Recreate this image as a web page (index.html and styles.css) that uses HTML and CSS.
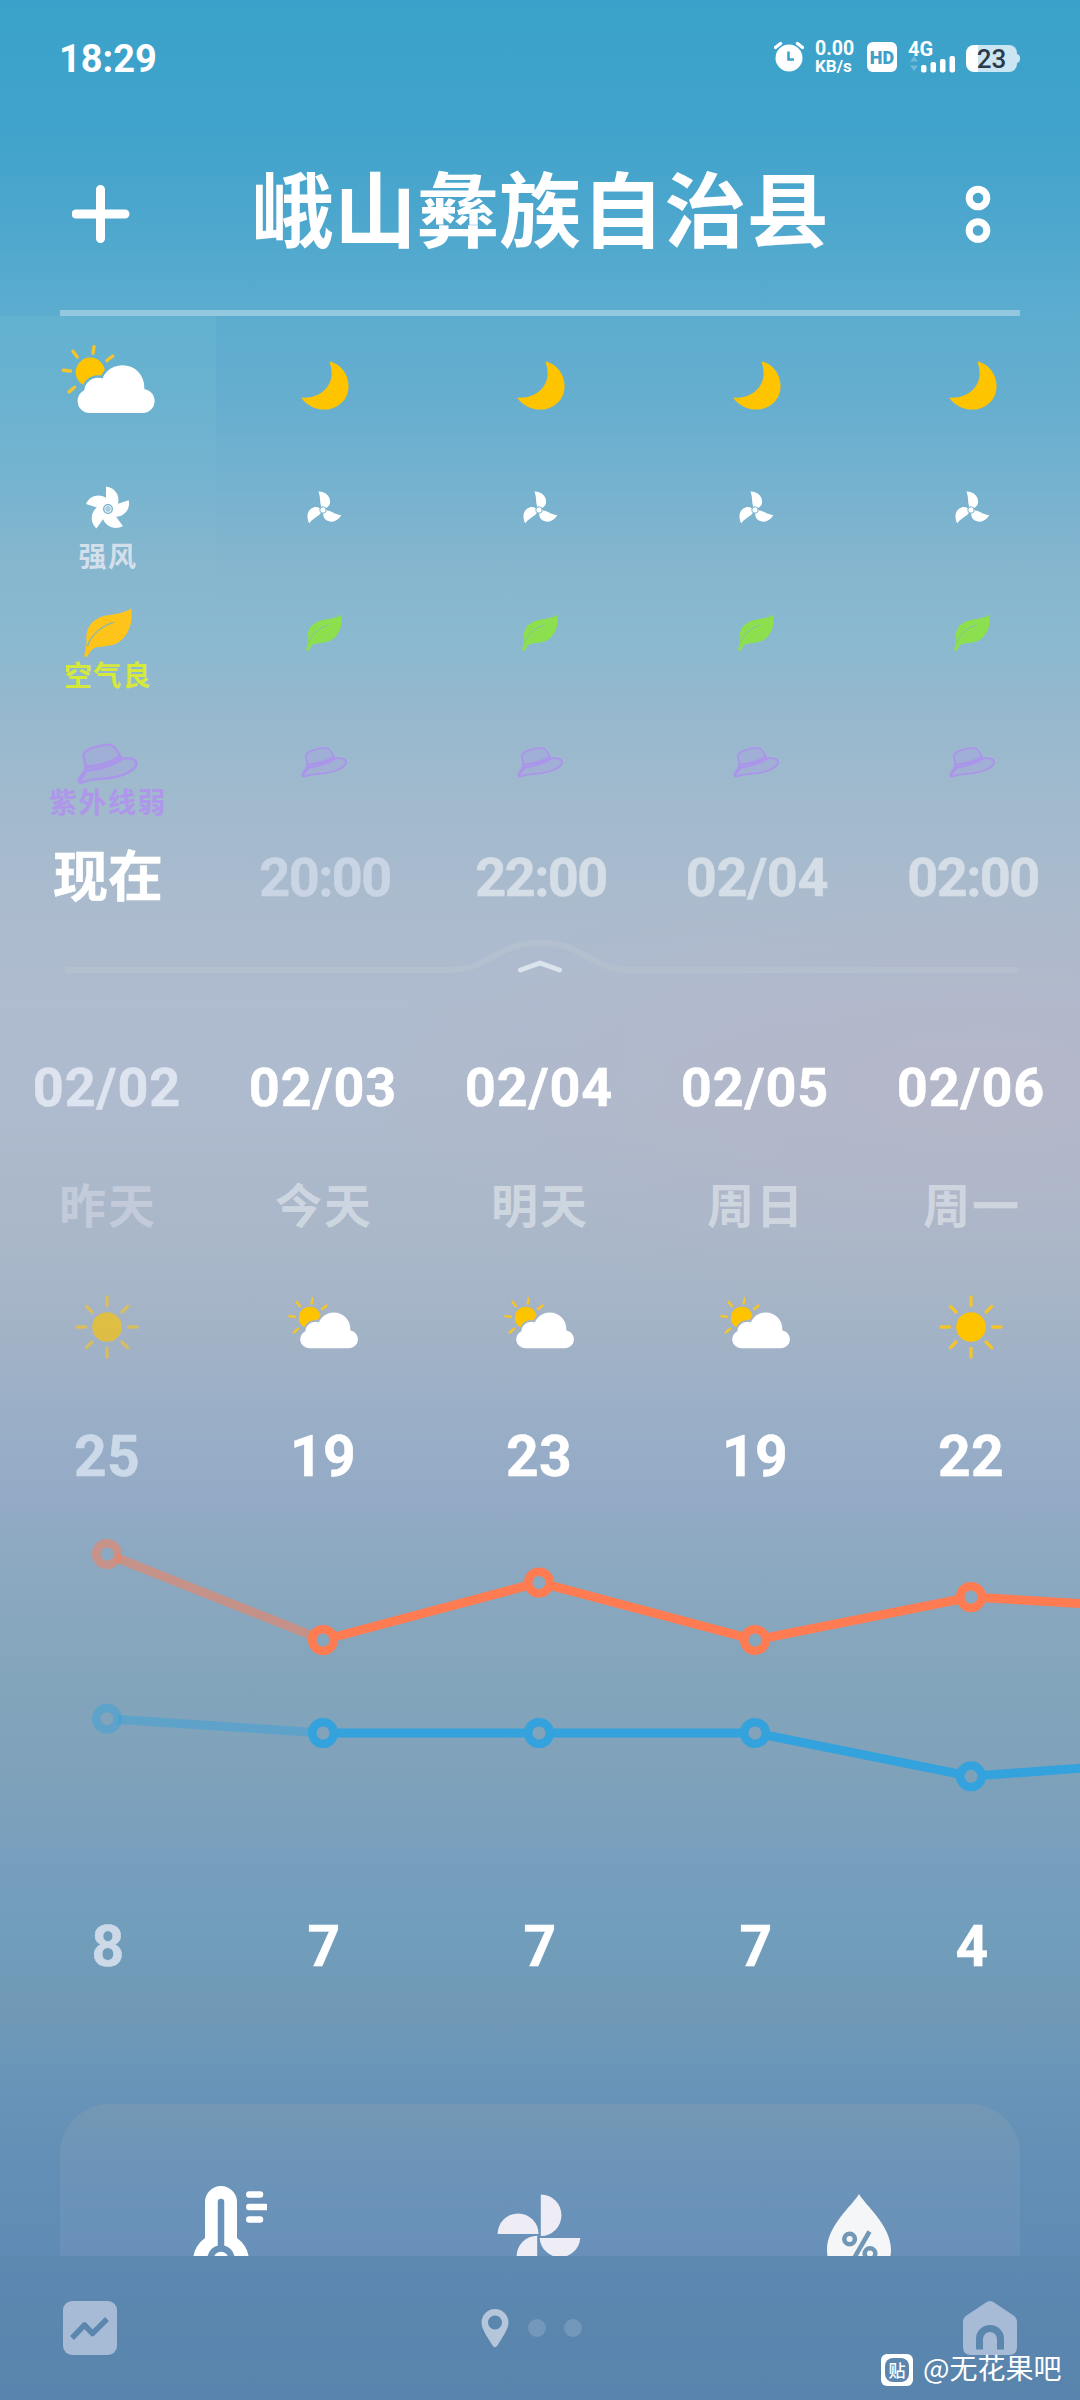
FILE: index.html
```html
<!DOCTYPE html>
<html lang="zh-CN">
<head>
<meta charset="utf-8">
<title>天气</title>
<link rel="stylesheet" href="styles.css">
</head>
<body>
<svg class="defs" width="0" height="0" aria-hidden="true">
  <defs>
    <mask id="sunCut" maskUnits="userSpaceOnUse" x="0" y="0" width="96" height="82">
      <rect width="96" height="82" fill="#fff"/>
      <g fill="#000" stroke="#000" stroke-width="5">
        <circle cx="62.5" cy="43" r="21.8"/><circle cx="38" cy="47.5" r="13.8"/><rect x="17.6" y="45" width="77" height="24" rx="12"/>
      </g>
    </mask>
    <mask id="chartHoles" maskUnits="userSpaceOnUse" x="0" y="0" width="1080" height="430">
      <rect width="1080" height="430" fill="#fff"/>
      <g fill="#000">
        <circle cx="107" cy="69" r="11"/><circle cx="323" cy="155" r="11"/><circle cx="539" cy="97.5" r="11"/><circle cx="755" cy="155" r="11"/><circle cx="971" cy="112" r="11"/>
        <circle cx="107" cy="233.7" r="11"/><circle cx="323" cy="248" r="11"/><circle cx="539" cy="248" r="11"/><circle cx="755" cy="248" r="11"/><circle cx="971" cy="291.3" r="11"/>
      </g>
    </mask>
  </defs>
  <symbol id="partly" viewBox="0 0 96 82">
    <circle cx="30.3" cy="28.2" r="14.6" fill="#ffc400" mask="url(#sunCut)"/>
    <path d="M33 9.3 34 2.8M17.2 13 13 7.2M46.8 16.6 52.8 12M10.4 27 3.4 26.2M14.6 43.2 9 48" fill="none" stroke="#f4c42c" stroke-width="3.4" stroke-linecap="round"/>
    <g fill="#fff"><circle cx="62.5" cy="43" r="21.8"/><circle cx="38" cy="47.5" r="13.8"/><rect x="17.6" y="45" width="77" height="24" rx="12"/><path d="M82 40 84.5 44.8 80 50 70 50Z"/></g>
  </symbol>
  <symbol id="moon" viewBox="0 0 49 49">
    <path d="M29.5 .5C41 3 48.6 13.500 48.600 25C48.600 38.500 38 48.600 24.500 48.600C14.500 48.600 6 44 1 36.500C18.500 38.500 34 26 31.300 8.500C30.800 5 30.300 3 29.500 .5Z" fill="#ffc400"/>
  </symbol>
  <symbol id="sun" viewBox="-36 -36 72 72">
    <circle r="14.800" fill="#ffc400"/>
    <path d="M0-21.500V-30M0 21.500V30M-21.500 0H-30M21.500 0H30M15-15 20.600-20.600M-15-15-20.600-20.600M15 15 20.600 20.600M-15 15-20.600 20.600" stroke="#f4c42c" stroke-width="3.300" stroke-linecap="round"/>
  </symbol>
  <symbol id="fan5" viewBox="-24 -24 48 48">
    <path id="blade5" d="M-2-22.500C7-21.500 12-13.500 10-5.500C9.500-3.500 7.500-1 5.500-.3L-2-4.500Z" fill="#fff"/>
    <use href="#blade5" transform="rotate(72)"/><use href="#blade5" transform="rotate(144)"/><use href="#blade5" transform="rotate(216)"/><use href="#blade5" transform="rotate(288)"/>
    <circle r="4.300" fill="#fff" stroke="#6fabc9" stroke-width="1.300"/><circle r="2.900" fill="#a9cfe2"/>
  </symbol>
  <symbol id="fan3" viewBox="-24 -25 48 48">
    <path id="blade3" d="M-4.500-18.500C3-18.500 8-13 7-7C6.500-4.500 5-3 3-2L-1.500-3C-3.500-7-2-11-4.500-18.500Z" fill="#fff"/>
    <use href="#blade3" transform="rotate(120)"/><use href="#blade3" transform="rotate(240)"/>
    <circle r="3.200" fill="#fff" stroke="#7bb3ce" stroke-width="1"/>
  </symbol>
  <symbol id="leaf" viewBox="0 0 48 50" overflow="visible">
    <path d="M47.300 .5C49.500 13 44.500 32 29 36.800C20 39.500 12 37.500 7.500 42L2.800 49 0 48.300C1.200 43 3 38 2.400 31C1.500 18 11 9.500 22 7.500C33 6 41 4.500 47.300 .5Z" fill="currentColor"/>
    <path d="M3.500 38C7 27 18 17.500 29.500 14.300" fill="none" stroke="#8cb9b4" stroke-width="1.300" stroke-linecap="round"/>
  </symbol>
  <symbol id="hat" viewBox="0 0 62 42" overflow="visible">
    <path d="M8.500 24C8.500 18 4.500 14 7.500 9.500C9.500 6 25 1.500 31.500 1.600C39 2 39.500 8 44.500 15.500C54 14 60 17 59.500 21C58.500 27 47 33 33 35C22 36.500 12 35.500 5.500 39.500C3 40.500 1 38.500 2 36C4 31 9 29 8.500 24Z" fill="rgba(174,150,234,.28)" stroke="#ab95ea" stroke-width="2.400" stroke-linejoin="round"/>
    <path d="M8.500 24C20 23 31 21 41.500 14.500M8.500 28C21 26 32 24 44 16.500M3 37.500 9.500 27" fill="none" stroke="#ab95ea" stroke-width="3" stroke-linecap="round"/>
  </symbol>
</svg>

<div class="screen">
  <header class="status">
    <span class="clock">18:29</span>
    <div class="status-icons">
      <svg class="alarm" width="30" height="32" viewBox="0 0 30 32"><circle cx="15" cy="18" r="13.500" fill="#fff"/><path d="M1.500 7.500 6.500 3.500M28.500 7.500 23.500 3.500" stroke="#fff" stroke-width="3.400" stroke-linecap="round"/><path d="M14.500 11.500V19.500H20" fill="none" stroke="#3ea2ca" stroke-width="2.600"/></svg>
      <span class="speed"><b>0.00</b><b class="unit">KB/s</b></span>
      <span class="hd">HD</span>
      <span class="cell"><b>4G</b>
        <svg width="48" height="17" viewBox="0 0 48 17"><g fill="#6fbad8"><path d="M1 5.500 5 0 9 5.500Z"/><path d="M1 9.500H9L5 15Z"/></g><g fill="#fff"><rect x="12" y="9" width="5.500" height="7.500" rx="2"/><rect x="21.500" y="6" width="5.500" height="10.500" rx="2"/><rect x="31" y="3" width="5.500" height="13.500" rx="2"/><rect x="40.500" y="0" width="5.500" height="16.500" rx="2"/></g></svg>
      </span>
      <span class="battery">23</span>
    </div>
  </header>

  <div class="header">
    <svg width="58" height="58" viewBox="0 0 58 58"><path d="M28.500 4.500V53.500M4 29H53" stroke="#fff" stroke-width="9" stroke-linecap="round"/></svg>
    <h1>峨山彝族自治县</h1>
    <svg width="58" height="58" viewBox="0 0 58 58"><g fill="none" stroke="#fff" stroke-width="7"><circle cx="30" cy="13" r="8.800"/><circle cx="30" cy="45.500" r="8.800"/></g></svg>
  </div>
  <div class="rule"></div>

  <section class="hourly">
    <div class="hour now">
      <div class="wx"><svg width="96" height="82"><use href="#partly"/></svg></div>
      <div class="wind"><svg width="48" height="48"><use href="#fan5"/></svg><span>强风</span></div>
      <div class="air good"><svg width="48" height="50"><use href="#leaf"/></svg><span>空气良</span></div>
      <div class="uv"><svg width="62" height="42"><use href="#hat"/></svg><span>紫外线弱</span></div>
      <div class="time">现在</div>
    </div>
    <div class="hour past">
      <div class="wx"><svg width="49" height="49"><use href="#moon"/></svg></div>
      <div class="wind"><svg width="48" height="48"><use href="#fan3"/></svg></div>
      <div class="air"><svg width="36" height="50"><use href="#leaf"/></svg></div>
      <div class="uv"><svg width="47" height="39"><use href="#hat"/></svg></div>
      <div class="time">20:00</div>
    </div>
    <div class="hour">
      <div class="wx"><svg width="49" height="49"><use href="#moon"/></svg></div>
      <div class="wind"><svg width="48" height="48"><use href="#fan3"/></svg></div>
      <div class="air"><svg width="36" height="50"><use href="#leaf"/></svg></div>
      <div class="uv"><svg width="47" height="39"><use href="#hat"/></svg></div>
      <div class="time">22:00</div>
    </div>
    <div class="hour">
      <div class="wx"><svg width="49" height="49"><use href="#moon"/></svg></div>
      <div class="wind"><svg width="48" height="48"><use href="#fan3"/></svg></div>
      <div class="air"><svg width="36" height="50"><use href="#leaf"/></svg></div>
      <div class="uv"><svg width="47" height="39"><use href="#hat"/></svg></div>
      <div class="time date">02/04</div>
    </div>
    <div class="hour">
      <div class="wx"><svg width="49" height="49"><use href="#moon"/></svg></div>
      <div class="wind"><svg width="48" height="48"><use href="#fan3"/></svg></div>
      <div class="air"><svg width="36" height="50"><use href="#leaf"/></svg></div>
      <div class="uv"><svg width="47" height="39"><use href="#hat"/></svg></div>
      <div class="time">02:00</div>
    </div>
  </section>

  <svg class="divider" width="1080" height="70" viewBox="0 0 1080 70">
    <path d="M65 40H450C490 40 495 13 540 13S590 40 630 40H1018" fill="none" stroke="#b7c3cf" stroke-opacity=".6" stroke-width="6"/>
    <path d="M520.500 40 540 33 559.500 40" fill="none" stroke="#dbe3ed" stroke-width="5" stroke-linecap="round" stroke-linejoin="round"/>
  </svg>

  <section class="daily">
    <div class="day yesterday"><span class="date">02/02</span><span class="name">昨天</span><svg width="72" height="72"><use href="#sun"/></svg><span class="temp">25</span></div>
    <div class="day"><span class="date">02/03</span><span class="name">今天</span><svg width="72" height="72" viewBox="0 0 72 72"><use href="#partly" y="5.500" width="72" height="61.500"/></svg><span class="temp">19</span></div>
    <div class="day"><span class="date">02/04</span><span class="name">明天</span><svg width="72" height="72" viewBox="0 0 72 72"><use href="#partly" y="5.500" width="72" height="61.500"/></svg><span class="temp">23</span></div>
    <div class="day"><span class="date">02/05</span><span class="name">周日</span><svg width="72" height="72" viewBox="0 0 72 72"><use href="#partly" y="5.500" width="72" height="61.500"/></svg><span class="temp">19</span></div>
    <div class="day"><span class="date">02/06</span><span class="name">周一</span><svg width="72" height="72"><use href="#sun"/></svg><span class="temp">22</span></div>
  </section>

  <svg class="chart" width="1080" height="430" viewBox="0 0 1080 430" fill="none">
    <g mask="url(#chartHoles)" stroke-width="9">
      <g stroke="#ff7c52"><path d="M107 69 323 155" stroke-opacity=".5"/><path d="M323 155 539 97.500 755 155 971 112 1090 119"/></g>
      <g stroke="#34a2dc"><path d="M107 233.700 323 248" stroke-opacity=".45"/><path d="M323 248H755L971 291.300 1090 282.500"/></g>
    </g>
    <g stroke-width="8.500">
      <g stroke="#ff7c52"><circle cx="107" cy="69" r="10.800" stroke-opacity=".5"/><circle cx="323" cy="155" r="10.800"/><circle cx="539" cy="97.500" r="10.800"/><circle cx="755" cy="155" r="10.800"/><circle cx="971" cy="112" r="10.800"/></g>
      <g stroke="#34a2dc"><circle cx="107" cy="233.700" r="10.800" stroke-opacity=".45"/><circle cx="323" cy="248" r="10.800"/><circle cx="539" cy="248" r="10.800"/><circle cx="755" cy="248" r="10.800"/><circle cx="971" cy="291.300" r="10.800"/></g>
    </g>
  </svg>

  <div class="lows"><span class="faded">8</span><span>7</span><span>7</span><span>7</span><span>4</span></div>

  <section class="details">
    <svg width="76" height="76" viewBox="190 2180 76 76"><path d="M204 2202a16 16 0 0 1 32 0V2238A28 28 0 1 1 204 2238Z" fill="#fff"/><path d="M220 2202V2248" stroke="#6892b7" stroke-width="6.500" stroke-linecap="round"/><circle cx="220" cy="2259" r="10.500" fill="#fff" stroke="#6892b7" stroke-width="6.500"/><path d="M248.300 2194.500H259M248.300 2207H264.300M248.300 2219.500H259" stroke="#fff" stroke-width="6.500" stroke-linecap="round"/></svg>
    <svg class="pinwheel" width="84" height="76" viewBox="497 2180 84 76" fill="#eeedf6"><path d="M497.600 2234A20.500 20.500 0 0 1 538.600 2234Z"/><path d="M540.800 2194.500A20.600 20.700 0 0 1 540.800 2236Z"/><path d="M539.600 2238H580.300A20.400 20.500 0 0 1 539.600 2238Z"/><path d="M537.200 2235.700V2277A20.600 20.600 0 0 1 537.200 2235.700Z"/></svg>
    <svg width="66" height="76" viewBox="826 2180 66 76"><path d="M859 2194C865 2205 891 2225 891 2250A32 32 0 0 1 827 2250C827 2225 853 2205 859 2194Z" fill="#f5f6f8"/><g fill="none" stroke="#7097b5" stroke-width="4.500"><circle cx="849.600" cy="2239" r="5.300"/><circle cx="870" cy="2253.500" r="5.300"/><path d="M869.500 2231.500 853 2260"/></g></svg>
  </section>

  <nav>
    <svg width="54" height="54" viewBox="0 0 54 54"><rect width="54" height="54" rx="9" fill="#a7bbd7"/><path d="M9 37 21.500 24 29.500 32.500 44 18" fill="none" stroke="#5b86ae" stroke-width="5.500" stroke-linejoin="round"/></svg>
    <div class="pager">
      <svg width="28" height="40" viewBox="0 0 28 40"><path fill-rule="evenodd" d="M14 1A13.500 13.500 0 0 1 27.500 14.500C27.500 22 20 31 16.500 37.500Q14 41 11.500 37.500C8 31 .5 22 .5 14.500A13.500 13.500 0 0 1 14 1ZM14 7.500A7 7 0 1 0 14 21.500 7 7 0 1 0 14 7.500Z" fill="#b5c6da"/></svg>
      <i></i><i></i>
    </div>
    <svg width="54" height="54" viewBox="0 0 54 54"><path d="M23 1.500Q27-1.500 31 1.500L50.500 14.500Q54 17 54 21V46Q54 54 46 54H8Q0 54 0 46V21Q0 17 3.500 14.500Z" fill="#a7bbd7"/><path d="M16.500 48.500V38A10.500 10.500 0 0 1 37.500 38V48.500" fill="none" stroke="#5b86ae" stroke-width="7"/></svg>
  </nav>

  <div class="watermark">
    <span class="badge"><em>贴</em></span>
    <span class="author">@无花果吧</span>
  </div>
</div>
</body>
</html>
```
FILE: styles.css
```css
* { box-sizing: border-box; }
body { margin: 0; }
svg { display: block; flex: none; }
.defs { position: absolute; }

.screen {
  position: relative;
  width: 1080px;
  height: 2400px;
  overflow: hidden;
  color: #fff;
  font-family: Roboto, "Noto Sans CJK SC", sans-serif;
  background:
    radial-gradient(ellipse 620px 230px at 980px 1090px, rgba(186, 180, 196, .5), rgba(186, 180, 196, 0)),
    linear-gradient(180deg,
      #3aa2ca 0, #40a3cb 120px, #4ba6cd 210px, #5aaccf 300px, #66aecf 400px, #76b2cf 490px,
      #85b5ce 560px, #8ab9d0 640px, #96b8ce 710px, #a1bacd 800px, #abbbce 900px, #afbbcf 1000px,
      #aebacd 1120px, #a9b7c9 1240px, #a3b3c6 1330px, #9aafc7 1410px, #94aac6 1500px,
      #8ca9c1 1560px, #83a5bc 1680px, #80a2ba 1760px, #789fbd 1850px, #719ebc 1930px,
      #7099b5 2010px, #6995b9 2080px, #638fb6 2160px, #608bb4 2250px, #5d88b1 2300px, #5884ad 2400px);
}

.status {
  display: flex;
  justify-content: space-between;
  height: 114px;
  padding: 40px 60px 0 59px;
}
.clock { font-size: 38px; line-height: 38px; font-weight: 700; }
.status-icons { display: flex; height: 34px; }
.alarm { margin-right: 11px; }
.speed { display: flex; flex-direction: column; width: 52px; }
.speed b { font-size: 19.500px; line-height: 18px; }
.speed .unit { font-size: 17px; line-height: 16px; }
.hd {
  width: 30px; height: 30px; margin: 2px 12px 0 0;
  border-radius: 6px; background: #fff; color: #3e9fc8;
  font-size: 18px; line-height: 31px; font-weight: 900; text-align: center;
}
.cell { width: 57px; }
.cell b { display: block; font-size: 20px; line-height: 19px; height: 16px; margin-left: -1px; }
.battery {
  position: relative;
  width: 51px; height: 27px; margin: 5px 3px 0 0;
  border-radius: 8px;
  background: linear-gradient(90deg, #fff 12px, #cbe6f2 12px);
  color: #2b3b49; font-size: 26px; line-height: 28px; font-weight: 500; text-align: center;
}
.battery::after {
  content: ""; position: absolute; right: -3px; top: 9px;
  width: 4px; height: 9px; border-radius: 0 4px 4px 0; background: #cbe6f2;
}

.header {
  display: flex;
  justify-content: space-between;
  align-items: center;
  height: 196px;
  padding: 4px 74px 0 72px;
}
.header h1 {
  margin: 0;
  padding: 0 0 16px 3px;
  font: 700 82px/110px "Noto Sans CJK SC", sans-serif;
  letter-spacing: .5px;
}
.rule { height: 6px; margin: 0 60px; background: rgba(255, 255, 255, .34); }

.hourly { display: grid; grid-template-columns: repeat(5, 216px); height: 614px; }
.hour { display: flex; flex-direction: column; align-items: center; }
.hour > div { display: flex; flex-direction: column; align-items: center; }
.hour.now { background: linear-gradient(180deg, rgba(145, 215, 215, .13), rgba(145, 205, 215, 0) 320px); }
.hour span {
  font: 700 28px/34px "Noto Sans CJK SC", sans-serif;
  letter-spacing: 1.400px;
  color: #d3dfeb;
}
.hour > .wx { height: 138px; justify-content: center; }
.hour > .wind { height: 122px; padding: 31px 2px 0 0; gap: 5px; }
.hour.now > .wind { padding-right: 0; }
.hour > .air { height: 130px; padding-top: 32px; color: #8ce04e; }
.hour > .air.good { color: #fec41a; }
.air.good span { color: #d6e93b; }
.air span, .uv span { margin-top: -1px; }
.hour > .uv { height: 120px; padding-top: 37px; }
.uv span { color: #ae96ea; }
.hour > .time {
  padding: 22px 0 0 2px;
  font-size: 54px; line-height: 60px; font-weight: 700;
  letter-spacing: -1.500px;
  color: #d5dee7;
  -webkit-text-stroke: .5px currentColor;
}
.hour > .time.date { letter-spacing: -.3px; }
.hour.past > .time { color: #c9d4e4; }
.hour.now > .time {
  padding: 16px 0 0;
  font-family: "Noto Sans CJK SC", sans-serif;
  font-size: 55px; color: #fff; letter-spacing: 0;
}

.daily { display: grid; grid-template-columns: repeat(5, 216px); padding-top: 58px; height: 485px; }
.day { display: flex; flex-direction: column; align-items: center; padding-right: 2px; }
.day .date {
  font-size: 54px; line-height: 60px; font-weight: 700; letter-spacing: .9px;
  -webkit-text-stroke: .5px currentColor;
}
.day .name {
  margin: 55px 0 58px 2px;
  font: 700 47px/60px "Noto Sans CJK SC", sans-serif;
  letter-spacing: 2px;
  color: rgba(240, 244, 246, .52);
}
.day .temp { margin-top: 64px; }
.temp, .lows {
  font-size: 57px; line-height: 60px; font-weight: 700; letter-spacing: .2px;
  -webkit-text-stroke: .5px currentColor;
}
.yesterday .date { color: #dde4f0; }
.yesterday .name { color: rgba(220, 222, 234, .5); }
.yesterday .temp, .lows .faded { color: #cbd9e8; }
.yesterday svg { opacity: .65; }

.lows {
  display: grid; grid-template-columns: repeat(5, 216px);
  height: 60px; padding-top: 2px; text-align: center;
}

.details {
  display: flex;
  height: 152px;
  margin: 129px 60px 0;
  padding: 76px 0 0 131px;
  border-radius: 50px 50px 0 0;
  background: linear-gradient(180deg, rgba(190, 180, 160, .14), rgba(180, 190, 200, .12) 60px, rgba(160, 180, 220, .13));
}
.pinwheel { margin: 0 245px 0 230px; }

nav {
  position: relative;
  display: flex;
  justify-content: space-between;
  height: 144px;
  padding: 45px 63px 0;
  background: rgba(90, 132, 173, .4);
}
.pager { display: flex; gap: 18px; padding-right: 18px; height: 54px; align-items: center; }
.pager i { width: 18px; height: 18px; border-radius: 50%; background: rgba(255, 255, 255, .15); }
.pager svg + i { margin-left: 1px; }

.watermark {
  position: absolute;
  left: 881px;
  top: 2352px;
  display: flex;
  align-items: center;
  gap: 10px;
  font: 400 28px/40px "Noto Sans CJK SC", sans-serif;
}
.author { margin-top: -5px; }
.badge {
  display: flex;
  width: 32px; height: 32px; padding: 4px;
  border-radius: 6px; background: #fff;
}
.badge em {
  flex: 1;
  border-radius: 8px; background: #5b86ae;
  font-size: 17px; line-height: 23px; font-style: normal; font-weight: 500; text-align: center;
}
```
